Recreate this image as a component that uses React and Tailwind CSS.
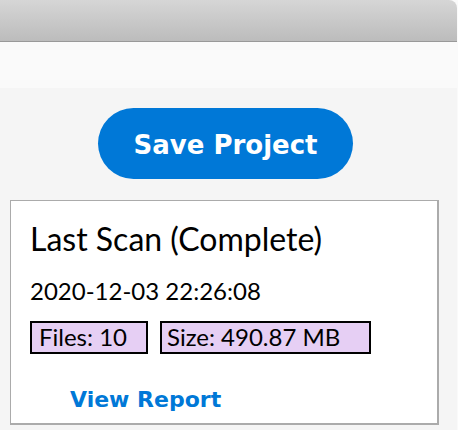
import React from "react";

const lato = { fontFamily: "Lato, 'Noto Sans', sans-serif" };

function App() {
  return (
    <div className="w-[458px] h-[430px] bg-[#fafafa] overflow-hidden">
      <div className="w-[457px] h-full flex flex-col">
        {/* title bar */}
        <div className="h-[42px] shrink-0 rounded-tr-[8px] bg-gradient-to-b from-[#d6d6d6] to-[#bcbcbc] border-b border-[#999999]" />
        {/* toolbar strip */}
        <div className="h-[46px] shrink-0 bg-[#fafafa]" />
        {/* content */}
        <div className="flex-1 bg-[#f5f5f5] pt-[20px]">
          <div className="w-[451px] flex justify-center">
            <button className="w-[255px] h-[71px] pt-[3px] rounded-full bg-[#0078d7] text-white text-[26px] font-bold font-['DejaVu_Sans',sans-serif]">
              Save Project
            </button>
          </div>

          <div className="ml-[10px] mt-[21px] w-[429px] h-[225px] bg-white border-t border-l border-r-2 border-b-2 border-[#ababab] pl-[19px] pt-[20px]">
            <h2 className="text-[32px] leading-[1.2] text-black -mt-[1px]" style={lato}>
              Last Scan (Complete)
            </h2>
            <p className="mt-[19px] text-[24px] leading-[1.2] text-black" style={lato}>
              2020-12-03 22:26:08
            </p>
            <div className="mt-[15px] flex gap-[12px]" style={lato}>
              <span className="w-[118px] h-[33px] border-2 border-black bg-[#e6cff4] pl-[7px] text-[24px] leading-[27px] text-black">
                Files: 10
              </span>
              <span className="w-[211px] h-[33px] border-2 border-black bg-[#e6cff4] pl-[5px] text-[24px] leading-[27px] text-black">
                Size: 490.87 MB
              </span>
            </div>
            <button className="mt-[33px] ml-[40px] block text-[22px] leading-[26px] font-bold text-[#0078d7] font-['DejaVu_Sans',sans-serif]">
              View Report
            </button>
          </div>
        </div>
      </div>
    </div>
  );
}

export default App;
